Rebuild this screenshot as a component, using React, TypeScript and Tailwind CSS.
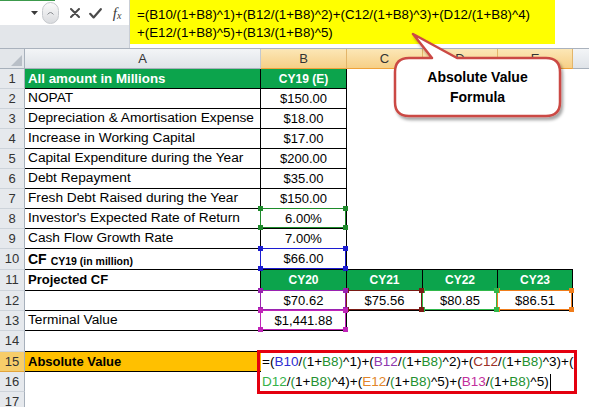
import React from "react";

type Seg = { t: string; c?: string };

const G8 = "text-[#23902f]";
const BLUE = "text-[#2f2fd2]";
const PURPLE = "text-[#8e39ad]";
const MAROON = "text-[#9c3127]";
const LGREEN = "text-[#35b249]";
const ORANGE = "text-[#e2852b]";
const MAGENTA = "text-[#c2309d]";

function term(lead: string, ref: string, refCls: string, pow: string): Seg[] {
  return [
    { t: lead },
    { t: ref, c: refCls },
    { t: "/" },
    { t: "(", c: G8 },
    { t: "1+" },
    { t: "B8", c: G8 },
    { t: ")", c: G8 },
    { t: `^${pow})` },
  ];
}

const line1: Seg[] = [
  ...term("=(", "B10", BLUE, "1"),
  ...term("+(", "B12", PURPLE, "2"),
  ...term("+(", "C12", MAROON, "3"),
  { t: "+(" },
];
const line2: Seg[] = [
  ...term("", "D12", LGREEN, "4"),
  ...term("+(", "E12", ORANGE, "5"),
  ...term("+(", "B13", MAGENTA, "5"),
];

function Segs({ segs }: { segs: Seg[] }) {
  return (
    <>
      {segs.map((s, i) => (
        <span key={i} className={s.c ?? "text-black"}>
          {s.t}
        </span>
      ))}
    </>
  );
}

function FormulaBar() {
  return (
    <div className="flex h-[49px] border-b border-[#aab2bd]">
      <div className="flex w-[130px] flex-col border-r border-[#c9ced6]">
        <div className="flex h-[25px] flex-col bg-white">
          <div className="h-px w-[55px] bg-[#3c9a4c]" />
          <div className="flex flex-1 items-center">
            <div className="flex h-full w-[42px] items-center justify-end pr-[4px]">
              <svg width="7" height="4" viewBox="0 0 7 4">
                <path d="M0 0h7L3.5 4z" fill="#3a3a3a" />
              </svg>
            </div>
            <div className="flex h-full w-[22px] items-center">
              <div className="flex h-[22px] w-[17px] items-center justify-center rounded-full border border-[#c6c9cd] bg-gradient-to-b from-[#fafafa] to-[#dadcdf]">
                <svg width="7" height="4" viewBox="0 0 7 4">
                  <path d="M0.5 3.5Q3.5 -0.5 6.5 3.5" fill="none" stroke="#8a8d91" strokeWidth="1" />
                </svg>
              </div>
            </div>
            <div className="flex h-full w-[23px] items-center justify-center">
              <svg width="10" height="10" viewBox="0 0 10 10">
                <path d="M1 1L9 9M9 1L1 9" stroke="#4a4a4a" strokeWidth="2" strokeLinecap="round" />
              </svg>
            </div>
            <div className="flex h-full w-[19px] items-center justify-center">
              <svg width="13" height="11" viewBox="0 0 13 11">
                <path d="M1.2 5.8L4.6 9.4L11.8 1.2" fill="none" stroke="#4a4a4a" strokeWidth="2.2" strokeLinecap="round" strokeLinejoin="round" />
              </svg>
            </div>
            <div className="flex h-full w-[24px] items-center justify-center font-['Liberation_Serif',serif] italic text-[#3a3a3a]">
              <span className="text-[15px] leading-none">f</span>
              <span className="mt-[5px] text-[10px] leading-none">x</span>
            </div>
          </div>
        </div>
        <div className="flex-1 bg-[#e3e6ea]" />
      </div>
      <div className="flex-1 bg-white">
        <div className="h-[44px] w-[425px] whitespace-nowrap bg-[#ffff00] pl-[7px] pt-[6px] text-[13.3px] leading-[18px] text-black">
          <div>=(B10/(1+B8)^1)+(B12/(1+B8)^2)+(C12/(1+B8)^3)+(D12/(1+B8)^4)</div>
          <div>+(E12/(1+B8)^5)+(B13/(1+B8)^5)</div>
        </div>
      </div>
    </div>
  );
}

function Cell({ className = "", children }: { className?: string; children?: React.ReactNode }) {
  return <div className={`relative flex min-w-0 items-center whitespace-nowrap ${className}`}>{children}</div>;
}

function RowHead({ n, active = false }: { n: number; active?: boolean }) {
  return (
    <div
      className={`flex items-center justify-center border-r border-b border-r-[#a7b0bb] text-[13px] text-[#333] ${
        active ? "border-b-[#e3a43c] bg-[#f7cd6a]" : "border-b-[#cdd3da] bg-[#e6e9ed]"
      }`}
    >
      {n}
    </div>
  );
}

type RefKind = "b8" | "b10" | "b12" | "c12" | "d12" | "e12" | "b13";

const refBox: Record<RefKind, string> = {
  b8: "z-[6] border-[#1e8a2b]",
  b10: "z-[6] border-[#1c1cd0]",
  b12: "z-[4] border-[#9a22b0]",
  c12: "z-[3] border-[#7a1a14]",
  d12: "z-[2] border-[#2fb84a]",
  e12: "z-[1] border-[#f07d1c]",
  b13: "z-[5] border-[#c024b8]",
};
const refSq: Record<RefKind, string> = {
  b8: "bg-[#1e8a2b]",
  b10: "bg-[#1c1cd0]",
  b12: "bg-[#9a22b0]",
  c12: "bg-[#7a1a14]",
  d12: "bg-[#2fb84a]",
  e12: "bg-[#f07d1c]",
  b13: "bg-[#c024b8]",
};

function RefBox({ kind }: { kind: RefKind }) {
  const sq = `absolute h-[5px] w-[5px] ${refSq[kind]}`;
  return (
    <div className={`pointer-events-none absolute -left-px -top-px right-0 bottom-0 border ${refBox[kind]}`}>
      <span className={`${sq} -left-[3px] -top-[3px]`} />
      <span className={`${sq} -right-[3px] -top-[3px]`} />
      <span className={`${sq} -left-[3px] -bottom-[3px]`} />
      <span className={`${sq} -right-[3px] -bottom-[3px]`} />
    </div>
  );
}

const BLK = "border-r border-b border-black";
const LBL = "overflow-hidden px-[3px] text-[13.7px]";
const NUM = "justify-center text-[13px]";
const GREEN = "bg-[#0ca44c] font-bold text-white";

const labels: [string, string][] = [
  ["NOPAT", "$150.00"],
  ["Depreciation & Amortisation Expense", "$18.00"],
  ["Increase in Working Capital", "$17.00"],
  ["Capital Expenditure during the Year", "$200.00"],
  ["Debt Repayment", "$35.00"],
  ["Fresh Debt Raised during the Year", "$150.00"],
  ["Investor's Expected Rate of Return", "6.00%"],
  ["Cash Flow Growth Rate", "7.00%"],
];

function Sheet() {
  return (
    <div className="grid grid-cols-[25px_236px_86px_76px_75px_75px_1fr] grid-rows-[20px_20px_20px_20px_20px_20px_20px_20px_20px_20px_21px_21px_20px_20px_21px_20px_20px_20px]">
      {/* column letters */}
      <div className="flex items-end justify-end border-r border-b border-r-[#a7b0bb] border-b-[#a7b0bb] bg-[#e3e6ea] p-[2px]">
        <svg width="11" height="11" viewBox="0 0 11 11">
          <path d="M11 0V11H0z" fill="#b9bfc7" />
        </svg>
      </div>
      <div className="flex items-center justify-center border-r border-b border-r-[#c3c9d1] border-b-[#a7b0bb] bg-gradient-to-b from-[#f3f5f7] to-[#dfe3e8] text-[13px] text-[#333]">
        A
      </div>
      {["B", "C", "D", "E"].map((l) => (
        <div
          key={l}
          className="flex items-center justify-center border-r border-b border-r-[#e3b56a] border-b-[#efa23a] bg-gradient-to-b from-[#fce7b6] to-[#f6cf86] text-[13px] text-[#333]"
        >
          {l}
        </div>
      ))}
      <div className="border-b border-b-[#a7b0bb] bg-gradient-to-b from-[#f3f5f7] to-[#dfe3e8]" />

      {/* row 1 */}
      <RowHead n={1} />
      <Cell className={`${BLK} ${GREEN} overflow-hidden px-[3px] text-[13.3px]`}>All amount in Millions</Cell>
      <Cell className={`${BLK} ${GREEN} justify-center text-[12px]`}>CY19 (E)</Cell>
      <Cell />
      <Cell />
      <Cell />
      <Cell />

      {/* rows 2-9 */}
      {labels.map(([label, value], i) => {
        const n = i + 2;
        return (
          <React.Fragment key={n}>
            <RowHead n={n} />
            <Cell className={`${BLK} ${LBL}`}>{label}</Cell>
            <Cell className={`${BLK} ${NUM}`}>
              {value}
              {n === 8 && <RefBox kind="b8" />}
            </Cell>
            <Cell />
            <Cell />
            <Cell />
            <Cell />
          </React.Fragment>
        );
      })}

      {/* row 10 */}
      <RowHead n={10} />
      <Cell className={`${BLK} overflow-hidden px-[3px] font-bold`}>
        <span className="text-[14px]">CF</span>
        <span className="ml-[4px] mt-[5px] text-[10.5px]">CY19 (in million)</span>
      </Cell>
      <Cell className={`${BLK} ${NUM}`}>
        $66.00
        <RefBox kind="b10" />
      </Cell>
      <Cell className="border-b border-black" />
      <Cell className="border-b border-black" />
      <Cell className="border-b border-black" />
      <Cell />

      {/* row 11 */}
      <RowHead n={11} />
      <Cell className={`${BLK} overflow-hidden px-[3px] text-[13px] font-bold`}>Projected CF</Cell>
      {["CY20", "CY21", "CY22", "CY23"].map((y) => (
        <Cell key={y} className={`${BLK} ${GREEN} justify-center text-[12px]`}>
          {y}
        </Cell>
      ))}
      <Cell />

      {/* row 12 */}
      <RowHead n={12} />
      <Cell className={BLK} />
      <Cell className={`${BLK} ${NUM}`}>
        $70.62
        <RefBox kind="b12" />
      </Cell>
      <Cell className={`${BLK} ${NUM}`}>
        $75.56
        <RefBox kind="c12" />
      </Cell>
      <Cell className={`${BLK} ${NUM}`}>
        $80.85
        <RefBox kind="d12" />
      </Cell>
      <Cell className={`${BLK} ${NUM}`}>
        $86.51
        <RefBox kind="e12" />
      </Cell>
      <Cell />

      {/* row 13 */}
      <RowHead n={13} />
      <Cell className={`${BLK} ${LBL}`}>Terminal Value</Cell>
      <Cell className={`${BLK} ${NUM}`}>
        $1,441.88
        <RefBox kind="b13" />
      </Cell>
      <Cell />
      <Cell />
      <Cell />
      <Cell />

      {/* row 14 */}
      <RowHead n={14} />
      <Cell className="border-b border-black" />
      <Cell />
      <Cell />
      <Cell />
      <Cell />
      <Cell />

      {/* row 15 */}
      <RowHead n={15} active />
      <Cell className="overflow-hidden border-b border-black bg-[#ffc000] px-[3px] text-[13px] font-bold">Absolute Value</Cell>
      <div className="relative z-[8] col-[3/7] row-[16/18] whitespace-nowrap bg-white pl-[1px] text-[13.5px] leading-[20px]">
        <div>
          <Segs segs={line1} />
        </div>
        <div className="flex items-center">
          <Segs segs={line2} />
          <span className="ml-px inline-block h-[17px] w-px bg-black" />
        </div>
        <div className="pointer-events-none absolute -left-[4px] -top-[2px] -right-[4px] -bottom-[2px] border-[3px] border-[#e4000f]" />
      </div>
      <Cell />

      {/* row 16 */}
      <RowHead n={16} />
      <Cell />
      <Cell />

      {/* row 17 */}
      <RowHead n={17} />
      <Cell />
      <Cell />
      <Cell />
      <Cell />
      <Cell />
      <Cell />
    </div>
  );
}

function Callout() {
  return (
    <div className="pointer-events-none absolute left-[380px] top-[25px] z-20 h-[105px] w-[200px]">
      <svg width="200" height="105" viewBox="0 0 200 105" className="absolute inset-0">
        <defs>
          <filter id="calloutShadow" x="-10%" y="-10%" width="130%" height="140%">
            <feDropShadow dx="2" dy="3" stdDeviation="1.6" floodColor="#000" floodOpacity="0.35" />
          </filter>
        </defs>
        <path
          d="M29 33L52 33L33 9L77 33L166 33Q180 33 180 47L180 77Q180 91 166 91L29 91Q15 91 15 77L15 47Q15 33 29 33Z"
          fill="#ffffff"
          stroke="#cb4a44"
          strokeWidth="2.5"
          strokeLinejoin="round"
          filter="url(#calloutShadow)"
        />
      </svg>
      <div className="absolute left-[15px] top-[33px] flex h-[58px] w-[165px] flex-col items-center justify-center text-[14px] font-bold leading-[20px] text-black">
        <span>Absolute Value</span>
        <span>Formula</span>
      </div>
    </div>
  );
}

export default function App() {
  return (
    <div className="relative h-[407px] w-[589px] overflow-hidden bg-white font-['Liberation_Sans',Arial,sans-serif] text-black">
      <FormulaBar />
      <Sheet />
      <Callout />
    </div>
  );
}
